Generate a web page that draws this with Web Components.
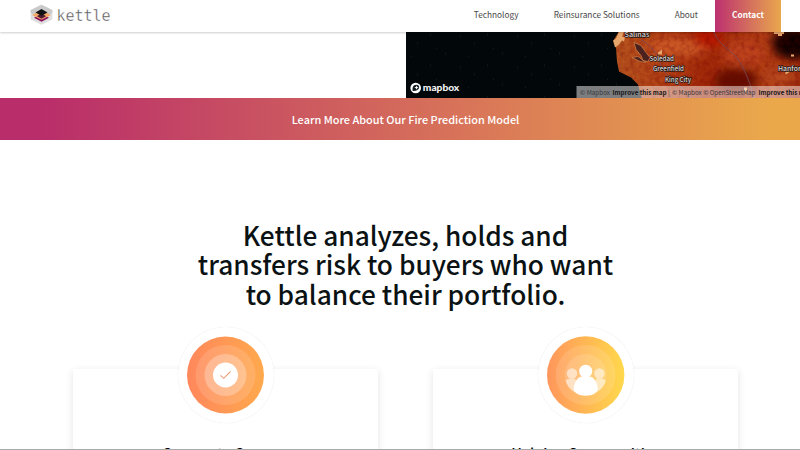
<!DOCTYPE html>
<html lang="en"><head><meta charset="utf-8"><title>Kettle</title>
<style>
html,body{margin:0;height:450px;overflow:hidden;background:#fff}
body{font-family:"Noto Sans CJK SC","Noto Sans",sans-serif;color:#0b1214}
</style></head><body>
<kettle-page></kettle-page>
<script>
const define=(name,html)=>{
  const t=document.createElement('template');t.innerHTML=html;
  customElements.define(name,class extends HTMLElement{
    constructor(){super();this.attachShadow({mode:'open'}).append(t.content.cloneNode(true));}
  });
};

define('kettle-logo',`<style>:host{display:flex;align-items:center;gap:4px;height:30px}
svg{display:block}</style>
<svg width="23" height="22" viewBox="0 0 23 22">
<path d="M11.500 .8 22.300 6v9.500L11.500 20.800.7 15.500V6Z" fill="#e0dfdf"/>
<path d="M11.500 .8 22.300 6v3L11.500 14.500.7 9V6Z" fill="#cbcaca"/>
<path d="M4 13.800 11.500 10l7.500 3.800-7.500 4Z" fill="#8d0f5c"/>
<path d="M2 11 11.500 6.500 21 11l-9.500 4.800Z" fill="#f6a866"/>
<path d="M7 12.300 11.500 9l4.500 3.300-4.500 2.500Z" fill="#4d1a30"/>
<path d="M5.500 8.500 11.500 5l6 3.500-6 3.300Z" fill="#121213"/></svg>
<svg width="54" height="22"><text x="-.5" y="17" textLength="54" lengthAdjust="spacingAndGlyphs" font-family="DejaVu Sans Mono" font-weight="200" font-size="16" fill="#4c4c4c" stroke="#fff" stroke-width=".4">kettle</text></svg>`);

define('nav-link',`<style>:host{display:block;font-size:8.300px;line-height:29px;color:#484848;white-space:nowrap}</style><slot></slot>`);

define('contact-button',`<style>:host{display:block;box-sizing:border-box;width:66px;height:32px;background:linear-gradient(90deg,#bd3070,#e9a84d);color:#fff;font-size:8.300px;font-weight:700;line-height:29px;text-align:center}</style><slot></slot>`);

define('site-header',`<style>:host{display:flex;position:relative;z-index:2;box-sizing:border-box;height:31.500px;padding:0 19px 0 30px;background:#fff;box-shadow:0 1px 2px #0003;justify-content:space-between;flex:none}
nav{display:flex}nav-link{margin-right:35px}.a{margin-right:17px}</style>
<kettle-logo></kettle-logo><nav><nav-link>Technology</nav-link><nav-link>Reinsurance Solutions</nav-link><nav-link class="a">About</nav-link><contact-button>Contact</contact-button></nav>`);

define('fire-map',`<style>:host{display:block;width:394.500px;height:66.500px;overflow:hidden}svg{display:block}</style>
<svg width="395" height="66.500" viewBox="406 31.500 395 66.500" font-family="Noto Sans CJK SC, Noto Sans, sans-serif">
<defs>
<linearGradient id="l"><stop offset="0" stop-color="#b6561f"/><stop offset=".3" stop-color="#b23f14"/><stop offset=".5" stop-color="#a02808"/><stop offset=".8" stop-color="#b03c14"/><stop offset="1" stop-color="#9f2c0c"/></linearGradient>
<filter id="b" x="-50%" y="-50%" width="200%" height="200%"><feGaussianBlur stdDeviation="5"/></filter>
<filter id="n" x="0" y="0" width="100%" height="100%"><feTurbulence type="fractalNoise" baseFrequency=".2" numOctaves="3" seed="4"/><feColorMatrix values="0 0 0 0 .15  0 0 0 0 0  0 0 0 0 0  .7 0 0 0 -.26"/></filter>
<pattern id="s" width="57" height="31" patternUnits="userSpaceOnUse"><path d="M4 5h1M18 12h1M31 3h1M46 22h1M12 25h1M37 17h1" stroke="#1c272f"/></pattern>
<clipPath id="c"><path d="M619 31 614 39 616 47 617 61 619 71 631 77 638 84 642 98H801V31Z"/></clipPath>
</defs>
<path fill="#02070a" d="M405 31h396v67H405z"/><path fill="url(#s)" d="M405 31h396v67H405z"/>
<g clip-path="url(#c)"><path fill="url(#l)" d="M610 31h191v67H610z"/>
<g filter="url(#b)"><ellipse cx="680" cy="47" rx="31" ry="9" fill="#cd5a26"/><ellipse cx="708" cy="38" rx="15" ry="10" fill="#b71703"/><ellipse cx="736" cy="80" rx="22" ry="13" fill="#650802"/><ellipse cx="743" cy="53" rx="20" ry="13" fill="#bd421a"/><ellipse cx="793" cy="43" rx="21" ry="16" fill="#100103"/><ellipse cx="780" cy="76" rx="17" ry="9" fill="#b84a1c"/></g>
<path filter="url(#n)" d="M610 31h191v67H610z"/></g>
<path d="M619 31l-3 7-3 2 2 7 4-3 3-4 2 1 1-4-3-1 2-5ZM774 31h10v2.500h-2v2h-4v-2h-4ZM658 52l4-3v5h-4ZM791 54h3v2h-3ZM785 72l4-2v2l-3 2ZM744 87h3v4h-3Z" fill="#e7a66b"/>
<path d="M634 42l7 3 5 7 4 5-2 4-5-1-2-5-5-6ZM632 57l6-1 8 6-6-1Z" fill="#4a211c" stroke="#d4844d" stroke-width=".7"/>
<path d="M714 31c2 10 13 16 20 23s15 23 20 44M641 39c11 7 17 15 19 23s7 13 12 16 13 13 19 20" fill="none" stroke="#7a4a5c" stroke-width=".8"/>
<g fill="#ded8d4" stroke="#211717" stroke-width="1.300" paint-order="stroke" font-size="6.800" font-weight="500">
<text x="624.500" y="36.500" textLength="25" lengthAdjust="spacingAndGlyphs">Salinas</text><text x="649.500" y="60" textLength="24.500" lengthAdjust="spacingAndGlyphs">Soledad</text><text x="653" y="70.500" textLength="31" lengthAdjust="spacingAndGlyphs">Greenfield</text><text x="665" y="81" textLength="26" lengthAdjust="spacingAndGlyphs">King City</text><text x="778" y="70" textLength="27" lengthAdjust="spacingAndGlyphs">Hanford</text></g>
<circle cx="415.700" cy="87.500" r="5.300" fill="#fff"/><path d="M412.700 90.600c-.5-3 0-6.300 3.600-6.300 4.600 0 3.900 6.700-3.600 6.300Z" fill="#111b20"/><path d="m416.500 85.100.7 1.300 1.400.6-1.400.7-.7 1.300-.7-1.300-1.400-.7 1.400-.6Z" fill="#fff"/>
<text x="422.800" y="90.300" textLength="36.500" lengthAdjust="spacingAndGlyphs" font-family="Lato" font-weight="900" font-size="10" fill="#f4f4f4">mapbox</text>
<path d="M576.500 85.500h225.500v13H576.500z" fill="#fff" opacity=".48"/>
<g font-size="6.500" fill="#38383c"><text x="580" y="94" textLength="30" lengthAdjust="spacingAndGlyphs">© Mapbox</text><text x="612.500" y="94" textLength="54" lengthAdjust="spacingAndGlyphs" font-weight="700" fill="#171719">Improve this map</text><text x="668" y="94">|</text><text x="672" y="94" textLength="83.500" lengthAdjust="spacingAndGlyphs">© Mapbox © OpenStreetMap</text><text x="758.500" y="94" textLength="54" lengthAdjust="spacingAndGlyphs" font-weight="700" fill="#171719">Improve this map</text></g>
</svg>`);

define('model-banner',`<style>:host{display:block;flex:none;height:42px;box-sizing:border-box;background:linear-gradient(90deg,#b92d6a 5%,#d87459 58%,#eaa84b 96%);color:#fff;font-size:10.930px;font-weight:500;line-height:42px;text-align:center;padding-left:11px}</style><slot></slot>`);

define('page-headline',`<style>:host{display:block;flex:none;height:229px;box-sizing:border-box;padding:80.500px 0 0 11px;text-align:center}
h1{margin:0;font-size:26.260px;line-height:29.700px;font-weight:500}</style><h1><slot></slot></h1>`);

define('feature-card',`<style>:host{display:flex;flex-direction:column;align-items:center;box-sizing:border-box;width:305px;height:180px;background:#fff;box-shadow:0 2px 8px #0000001c}
.ring{display:flex;justify-content:center;align-items:center;width:96px;height:96px;margin-top:-42.300px;border-radius:50%;background:#fff;box-shadow:0 0 1px #0002;flex:none}
h2{margin:18.800px 0 0;padding-left:var(--title-indent,0);font-size:14.350px;line-height:22px;font-weight:500;color:#000;white-space:nowrap}</style><div class="ring"><slot name="icon"></slot></div><h2><slot></slot></h2>`);

define('check-icon',`<style>:host,svg{display:block}</style><svg width="78" height="78" viewBox="-38.500 -39 78 78"><defs><linearGradient id="g"><stop stop-color="#ff875c"/><stop offset="1" stop-color="#ffa94d"/></linearGradient></defs><circle r="38.500" fill="url(#g)"/><circle r="30" fill="#fff" opacity=".13"/><circle r="21" fill="#fff" opacity=".27"/><circle r="12.500" fill="#fff"/><path d="m-5 .3 3.200 3L5-3.500" fill="none" stroke="#f2a079" stroke-width="1.100"/></svg>`);

define('people-icon',`<style>:host,svg{display:block}</style><svg width="78" height="78" viewBox="-38.700 -39 78 78"><defs><linearGradient id="g"><stop stop-color="#ff965c"/><stop offset="1" stop-color="#ffd84b"/></linearGradient></defs><circle r="38.700" fill="url(#g)"/><circle r="30" fill="#fff" opacity=".12"/><circle r="21" fill="#fff" opacity=".13"/>
<g fill="#fff" opacity=".55"><circle cx="-13.700" cy="-1.500" r="5.200"/><circle cx="13.700" cy="-1.500" r="5.200"/><path d="M-16 3.500h5c3 3 2 9 1 14C-15 15-19 11-20 5ZM16 3.500h-5c-3 3-2 9-1 14C15 15 19 11 20 5Z"/></g>
<g fill="#fff"><circle cy="-3.800" r="6.500"/><path d="M-4 1.500h8c5 1 8 7 8 13.500C10 19 6 20.700 0 20.700S-10 19-12 15C-12 8.500-9 2.500-4 1.500Z"/></g></svg>`);

define('kettle-page',`<style>:host{display:flex;flex-direction:column;height:450px;position:relative;overflow:hidden}
.map{display:flex;flex:none;justify-content:flex-end;height:66.500px}.cards{display:flex;flex:none;gap:55px;padding-left:73px}
.cover{--title-indent:9px}
.edge{position:absolute;left:0;right:0;bottom:0;height:1px;background:#aaa}</style>
<site-header></site-header><div class="map"><fire-map></fire-map></div>
<model-banner>Learn More About Our Fire Prediction Model</model-banner>
<page-headline>Kettle analyzes, holds and<br>transfers risk to buyers who want<br>to balance their portfolio.</page-headline>
<div class="cards"><feature-card class="cover"><check-icon slot="icon"></check-icon>Corporate Coverage</feature-card><feature-card><people-icon slot="icon"></people-icon>Helping Communities</feature-card></div><div class="edge"></div>`);
</script></body></html>
